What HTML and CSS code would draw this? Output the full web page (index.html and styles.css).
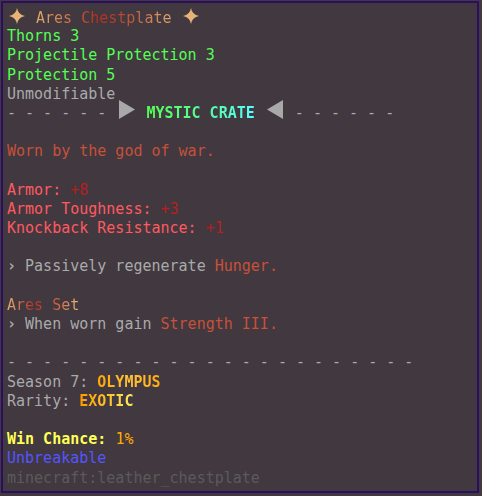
FILE: index.html
```html
<!DOCTYPE html>
<html>
<head>
<meta charset="utf-8">
<link rel="stylesheet" href="styles.css">
</head>
<body>
<div class="tip">
  <div class="line"><span class="star"><svg viewBox="0 0 20 16" width="20" height="16"><path d="M10 0 Q11 6.5 18 8 Q11 9.5 10 16 Q9 9.5 2 8 Q9 6.5 10 0Z" fill="#e6b479"/></svg></span> <span class="g-ares">Ares Chestplate</span> <span class="star"><svg viewBox="0 0 20 16" width="20" height="16"><path d="M10 0 Q11 6.5 18 8 Q11 9.5 10 16 Q9 9.5 2 8 Q9 6.5 10 0Z" fill="#e6b479"/></svg></span></div>
  <div class="line green">Thorns 3</div>
  <div class="line green">Projectile Protection 3</div>
  <div class="line green">Protection 5</div>
  <div class="line gray">Unmodifiable</div>
  <div class="line gray">- - - - - - <svg class="tri" viewBox="0 0 22 19" width="22" height="19"><polygon points="4,0 20,9.5 4,19" fill="#a9a9a9"/></svg> <span class="g-crate">MYSTIC CRATE</span> <svg class="tri" viewBox="0 0 22 19" width="22" height="19"><polygon points="19,0 3,9.5 19,19" fill="#a9a9a9"/></svg> - - - - - -</div>
  <div class="line"></div>
  <div class="line rust">Worn by the god of war.</div>
  <div class="line"></div>
  <div class="line red">Armor: <span class="dred">+8</span></div>
  <div class="line red">Armor Toughness: <span class="dred">+3</span></div>
  <div class="line red">Knockback Resistance: <span class="dred">+1</span></div>
  <div class="line"></div>
  <div class="line gray"><span class="chev">›</span> Passively regenerate <span class="rust">Hunger.</span></div>
  <div class="line"></div>
  <div class="line"><span class="g-set">Ares Set</span></div>
  <div class="line gray"><span class="chev">›</span> When worn gain <span class="rust">Strength III.</span></div>
  <div class="line"></div>
  <div class="line gray">- - - - - - - - - - - - - - - - - - - - - - -</div>
  <div class="line gray">Season 7: <span class="g-gold bold">OLYMPUS</span></div>
  <div class="line gray">Rarity: <span class="g-exotic bold">EXOTIC</span></div>
  <div class="line"></div>
  <div class="line"><span class="yellow bold">Win Chance:</span> <span class="gold">1%</span></div>
  <div class="line blue">Unbreakable</div>
  <div class="line dgray">minecraft:leather_chestplate</div>
</div>
</body>
</html>
```
FILE: styles.css
```css
html, body {
  margin: 0;
  padding: 0;
  background: #413840;
}
body {
  width: 482px;
  height: 496px;
  overflow: hidden;
}
.tip {
  margin: 1px 3px 3px 1px;
  border: 2px solid #2b0d62;
  padding: 5px 4px 3px 4px;
  height: 480px;
  font-family: "DejaVu Sans Mono", "Liberation Mono", monospace;
  font-size: 15px;
  color: #aaaaaa;
}
.line {
  height: 19.2px;
  line-height: 19.2px;
  white-space: pre;
}
.star {
  display: inline-block;
  width: 20px;
  height: 16px;
  vertical-align: -1px;
}
.star svg { display: block; }
.tri {
  display: inline-block;
  vertical-align: -1px;
  margin-top: -6px;
}
.chev { font-weight: bold; }
.green { color: #55ff55; }
.gray { color: #aaaaaa; }
.rust { color: #c75139; }
.red { color: #ff5a5f; }
.dred { color: #b51f1f; }
.yellow { color: #ffff55; }
.gold { color: #ffaa00; }
.blue { color: #5555ff; }
.dgray { color: #5b5b5b; }
.bold { font-weight: bold; }
.g-ares, .g-set, .g-crate, .g-gold, .g-exotic {
  -webkit-background-clip: text;
  background-clip: text;
  color: transparent;
}
.g-ares {
  background-image: linear-gradient(90deg, #dca86f 0%, #cf7a4c 22%, #b32f22 45%, #b8402c 60%, #dca86f 100%);
}
.g-set {
  background-image: linear-gradient(90deg, #e0ae72 0%, #b7352a 35%, #c54a30 60%, #e6b777 100%);
}
.g-crate {
  font-weight: bold;
  background-image: linear-gradient(90deg, #55ff55 0%, #55ff88 45%, #55ffff 100%);
}
.g-gold {
  background-image: linear-gradient(90deg, #ffa500 0%, #ffc23a 50%, #ffaa10 100%);
}
.g-exotic {
  background-image: linear-gradient(90deg, #ff9a00 0%, #ffc830 60%, #ffee66 100%);
}
```
